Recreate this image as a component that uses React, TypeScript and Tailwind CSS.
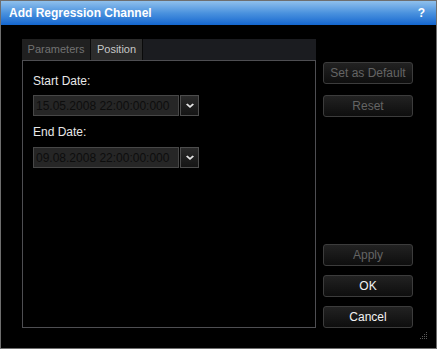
import React from "react";

function DateField({ value }: { value: string }) {
  return (
    <div className="flex h-[21px] w-[166px]">
      <div className="flex-1 flex items-center bg-[#262626] border border-[#474747] pl-[2px] text-[12px] text-[#0d0d0d] leading-none whitespace-nowrap overflow-hidden">
        {value}
      </div>
      <div className="w-[19px] ml-[1px] bg-gradient-to-b from-[#2a2a2a] to-[#151515] border border-[#4d4d4d] flex items-center justify-center">
        <svg width="8" height="6" viewBox="0 0 8 6">
          <path d="M0 1.5 L4 5 L8 1.5 L6.5 0.5 L4 2.8 L1.5 0.5 Z" fill="#e6e6e6" />
        </svg>
      </div>
    </div>
  );
}

function Btn({ label, disabled }: { label: string; disabled?: boolean }) {
  return (
    <button
      className={
        "w-[90px] h-[22px] rounded-[3px] border border-[#3c3c3c] bg-gradient-to-b from-[#222222] to-[#0e0e0e] text-[12px] leading-none " +
        (disabled ? "text-[#646464]" : "text-[#f2f2f2]")
      }
    >
      {label}
    </button>
  );
}

export default function App() {
  return (
    <div
      className="w-[437px] h-[349px] bg-black border border-[#6e6e6e] flex flex-col"
      style={{ fontFamily: '"Liberation Sans", Arial, sans-serif' }}
    >
      {/* title */}
      <div className="h-[24px] shrink-0 bg-gradient-to-b from-[#8fc0ec] via-[#4a92de] to-[#1266cf] flex items-center justify-between pl-[8px] pr-[11px] text-white font-bold text-[12px]">
        <span>Add Regression Channel</span>
        <span>?</span>
      </div>

      <div className="flex pl-[21px] pt-[14px] relative flex-1">
        {/* tabs + panel */}
        <div className="w-[294px] flex flex-col">
          <div className="h-[21px] flex bg-[#1b1c20] text-[11px]">
            <div className="w-[69px] bg-[#202020] border-r border-[#0a0a0a] text-[#727272] flex items-center justify-center">
              Parameters
            </div>
            <div className="w-[52px] bg-[#2c2c2c] text-[#c8c8c8] flex items-center justify-center border-r border-[#0a0a0a]">
              Position
            </div>
          </div>
          <div className="h-[268px] border border-[#4e4e52] pl-[10px] pt-[14px] text-[12px] text-[#e8e8e8]">
            <div className="leading-none h-[12px]">Start Date:</div>
            <div className="mt-[8px]">
              <DateField value="15.05.2008 22:00:00:000" />
            </div>
            <div className="leading-none h-[12px] mt-[10px]">End Date:</div>
            <div className="mt-[9px]">
              <DateField value="09.08.2008 22:00:00:000" />
            </div>
          </div>
        </div>

        {/* buttons */}
        <div className="ml-[7px] pt-[23px] flex flex-col">
          <Btn label="Set as Default" disabled />
          <div className="mt-[9px]">
            <Btn label="Reset" disabled />
          </div>
          <div className="mt-auto flex flex-col gap-[9px] mb-[20px]">
            <Btn label="Apply" disabled />
            <Btn label="OK" />
            <Btn label="Cancel" />
          </div>
        </div>

        {/* resize grip */}
        <svg className="absolute right-[9px] bottom-[9px]" width="7" height="7" viewBox="0 0 7 7">
          {[
            [6, 0], [6, 2], [4, 2], [6, 4], [4, 4], [2, 4], [6, 6], [4, 6], [2, 6], [0, 6],
          ].map(([x, y], i) => (
            <rect key={i} x={x} y={y} width="1" height="1" fill="#5a5a5a" />
          ))}
        </svg>
      </div>
    </div>
  );
}
